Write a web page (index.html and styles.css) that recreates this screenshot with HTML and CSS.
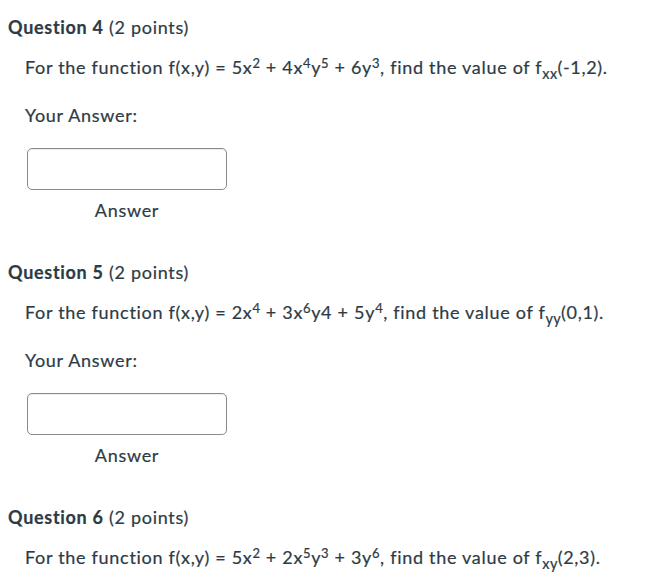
FILE: index.html
```html
<!DOCTYPE html>
<html>
<head>
<meta charset="utf-8">
<link rel="stylesheet" href="styles.css">
</head>
<body>
<div class="quiz">
  <div class="question">
    <div class="q-header"><b>Question 4</b> (2 points)</div>
    <div class="q-body">
      <p class="q-text">For the function f(x,y) = 5x<sup>2</sup> + 4x<sup>4</sup>y<sup>5</sup> + 6y<sup>3</sup>, find the value of f<sub>xx</sub>(-1,2).</p>
      <p class="q-label">Your Answer:</p>
      <div class="answer">
        <input class="answer-box" type="text">
        <div class="answer-caption">Answer</div>
      </div>
    </div>
  </div>
  <div class="question">
    <div class="q-header"><b>Question 5</b> (2 points)</div>
    <div class="q-body">
      <p class="q-text">For the function f(x,y) = 2x<sup>4</sup> + 3x<sup>6</sup>y4 + 5y<sup>4</sup>, find the value of f<sub>yy</sub>(0,1).</p>
      <p class="q-label">Your Answer:</p>
      <div class="answer">
        <input class="answer-box" type="text">
        <div class="answer-caption">Answer</div>
      </div>
    </div>
  </div>
  <div class="question">
    <div class="q-header"><b>Question 6</b> (2 points)</div>
    <div class="q-body">
      <p class="q-text">For the function f(x,y) = 5x<sup>2</sup> + 2x<sup>5</sup>y<sup>3</sup> + 3y<sup>6</sup>, find the value of f<sub>xy</sub>(2,3).</p>
    </div>
  </div>
</div>
</body>
</html>
```
FILE: styles.css
```css
html, body {
  margin: 0;
  padding: 0;
  background: #ffffff;
}
body {
  font-family: Lato, "Liberation Sans", sans-serif;
  color: #2d3b45;
  font-size: 18px;
  line-height: 24px;
  letter-spacing: 0.7px;
  font-variant-ligatures: none;
  -webkit-text-stroke: 0.2px #2d3b45;
}
.quiz {
  padding: 15px 0 0 8px;
}
.question {
  margin-bottom: 38px;
}
.q-header {
  font-size: 18px;
}
.q-header b {
  font-weight: 700;
}
.q-body {
  padding-left: 17px;
}
.q-text {
  margin: 16px 0 0;
}
.q-text sup, .q-text sub {
  line-height: 0;
  letter-spacing: 0.5px;
}
.q-text sup {
  font-size: 13px;
  vertical-align: 6px;
}
.q-text sub {
  font-size: 14.5px;
  letter-spacing: 0.3px;
  vertical-align: -5px;
}
.q-label {
  margin: 24px 0 0;
}
.answer {
  margin: 21px 0 0 2px;
  width: 200px;
  display: flex;
  flex-direction: column;
  align-items: center;
}
.answer-box {
  box-sizing: border-box;
  width: 200px;
  height: 42px;
  margin: 0;
  border: 1px solid #8a8a8a;
  border-radius: 5px;
  box-shadow: inset 0 1px 1px #e8eef4;
  background: #fff;
  font: inherit;
}
.answer-caption {
  margin-top: 8px;
}
```
